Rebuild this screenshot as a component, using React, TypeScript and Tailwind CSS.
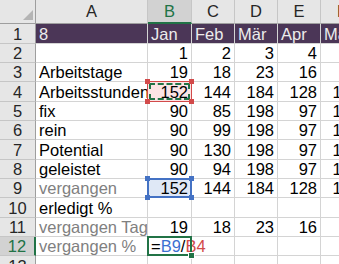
import React from "react";

type Row = { a: string; gray?: boolean; v: string[] };

const COLS = ["A", "B", "C", "D", "E", "F"];

const ROWS: Row[] = [
  { a: "8", v: ["Jan", "Feb", "Mär", "Apr", "Mai"] },
  { a: "", v: ["1", "2", "3", "4", "5"] },
  { a: "Arbeitstage", v: ["19", "18", "23", "16", "20"] },
  { a: "Arbeitsstunden", v: ["152", "144", "184", "128", "160"] },
  { a: "fix", v: ["90", "85", "198", "97", "120"] },
  { a: "rein", v: ["90", "99", "198", "97", "124"] },
  { a: "Potential", v: ["90", "130", "198", "97", "155"] },
  { a: "geleistet", v: ["90", "94", "198", "97", "128"] },
  { a: "vergangen", gray: true, v: ["152", "144", "184", "128", "160"] },
  { a: "erledigt %", v: ["", "", "", "", ""] },
  { a: "vergangen Tage", gray: true, v: ["19", "18", "23", "16", "20"] },
  { a: "vergangen %", gray: true, v: ["", "", "", "", ""] },
  { a: "", v: ["", "", "", "", ""] },
];

function Corners({ color }: { color: string }) {
  return (
    <>
      <span className={`absolute -left-[3px] -top-[3px] h-[5px] w-[5px] ${color}`} />
      <span className={`absolute -right-[3px] -top-[3px] h-[5px] w-[5px] ${color}`} />
      <span className={`absolute -left-[3px] -bottom-[3px] h-[5px] w-[5px] ${color}`} />
      <span className={`absolute -right-[3px] -bottom-[3px] h-[5px] w-[5px] ${color}`} />
    </>
  );
}

export default function App() {
  const cell =
    "flex items-end whitespace-nowrap border-r border-b border-r-[#d4d4d4] border-b-[#d4d4d4] px-[3px] leading-[18px]";

  return (
    <div className="h-[264px] w-[339px] overflow-hidden bg-white text-[16.5px] text-black [font-family:'Liberation_Sans',Arial,sans-serif]">
      <div className="grid grid-cols-[36px_112px_44px_43px_43px_43px_43px] grid-rows-[24px_20px_19px_19px_20px_19px_19px_20px_19px_19px_20px_19px_19px_20px]">
        {/* column headers */}
        <div className="relative border-r border-b border-r-[#9e9e9e] border-b-[#9e9e9e] bg-[#e6e6e6]">
          <svg className="absolute inset-0" width="36" height="24" viewBox="0 0 36 24">
            <polygon points="33,10 33,20 23,20" fill="#b4b4b4" />
          </svg>
        </div>
        {COLS.map((c) =>
          c === "B" ? (
            <div
              key={c}
              className="flex items-center justify-center border-r border-b-2 border-r-[#c6c6c6] border-b-[#217346] bg-[#d2d2d2] text-[#217346]"
            >
              {c}
            </div>
          ) : (
            <div
              key={c}
              className="flex items-center justify-center border-r border-b border-r-[#c6c6c6] border-b-[#9e9e9e] bg-[#e6e6e6] text-[#262626]"
            >
              {c}
            </div>
          )
        )}

        {ROWS.map((r, i) => {
          const n = i + 1;
          const purple = n === 1;
          return (
            <React.Fragment key={n}>
              {n === 12 ? (
                <div className="flex items-end justify-center border-r-2 border-b border-r-[#217346] border-b-[#c6c6c6] bg-[#d2d2d2] leading-[18px] text-[#217346]">
                  {n}
                </div>
              ) : (
                <div className="flex items-end justify-center border-r border-b border-r-[#9e9e9e] border-b-[#c6c6c6] bg-[#e6e6e6] leading-[18px] text-[#262626]">
                  {n}
                </div>
              )}

              {/* column A */}
              <div
                className={`${cell} overflow-hidden ${
                  purple ? "border-r-[#4b3657] bg-[#4b3657] text-[#ececec]" : r.gray ? "text-[#808080]" : ""
                }`}
              >
                {r.a}
              </div>

              {/* B..F */}
              {r.v.map((v, j) => {
                if (purple) {
                  return (
                    <div key={j} className={`${cell} overflow-hidden border-r-[#4b3657] bg-[#4b3657] text-[#ececec]`}>
                      {v}
                    </div>
                  );
                }
                if (j === 0 && n === 4) {
                  return (
                    <div key={j} className={`${cell} relative justify-end bg-[#fbe4e4]`}>
                      {v}
                      <span className="absolute -inset-[1px] border border-[#d24a4a]" />
                      <span className="absolute inset-[1px] border-2 border-dashed border-[#217346]" />
                      <Corners color="bg-[#d24a4a]" />
                    </div>
                  );
                }
                if (j === 0 && n === 9) {
                  return (
                    <div key={j} className={`${cell} relative justify-end bg-[#dfe8f6]`}>
                      {v}
                      <span className="absolute -inset-[1px] border-2 border-[#4472c4]" />
                      <Corners color="bg-[#4472c4]" />
                    </div>
                  );
                }
                if (j === 0 && n === 12) {
                  return (
                    <div key={j} className={`${cell} relative`}>
                      <span>=</span>
                      <span className="text-[#3c6fd1]">B9</span>
                      <span>/</span>
                      <span className="text-[#d24a4a]">B4</span>
                      <span className="absolute -inset-[1px] border-2 border-[#217346]" />
                      <span className="absolute -bottom-[4px] -right-[4px] h-[7px] w-[7px] border border-white bg-[#217346]" />
                    </div>
                  );
                }
                return (
                  <div key={j} className={`${cell} justify-end overflow-hidden`}>
                    {v}
                  </div>
                );
              })}
            </React.Fragment>
          );
        })}
      </div>
    </div>
  );
}
